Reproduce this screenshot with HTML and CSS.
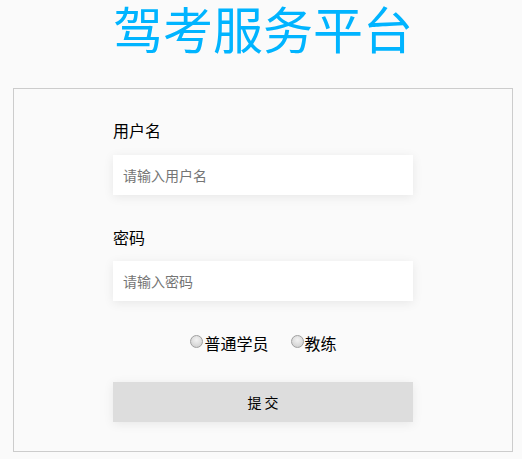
FILE: index.html
```html
<!DOCTYPE html>
<html lang="zh-CN">
<head>
<meta charset="utf-8">
<title>驾考服务平台</title>
<link rel="stylesheet" href="styles.css">
</head>
<body>
<h1 class="title">驾考服务平台</h1>
<form class="panel">
  <div class="field">
    <label class="field-label" for="user">用户名</label>
    <input class="field-input" id="user" type="text" placeholder="请输入用户名">
  </div>
  <div class="field">
    <label class="field-label" for="pwd">密码</label>
    <input class="field-input" id="pwd" type="password" placeholder="请输入密码">
  </div>
  <div class="roles">
    <label class="role"><input class="role-radio" type="radio" name="role">普通学员</label>
    <label class="role"><input class="role-radio" type="radio" name="role">教练</label>
  </div>
  <button class="submit" type="button">提 交</button>
</form>
</body>
</html>
```
FILE: styles.css
```css
* { box-sizing: border-box; }
html, body { margin: 0; padding: 0; }
body {
  background: #fafafa;
  font-family: "Noto Sans CJK SC", "Liberation Sans", sans-serif;
  color: #000;
  padding: 0 10px 0 13px;
}
.title {
  margin: 0;
  font-size: 50px;
  font-weight: normal;
  line-height: 54px;
  text-align: center;
  color: #00b4ff;
  padding-left: 1px;
}
.panel {
  margin-top: 34px;
  width: 500px;
  border: 1px solid #cccccc;
  background: #fafafa;
  display: flex;
  flex-direction: column;
  align-items: center;
  padding: 31px 0 29px;
}
.field {
  width: 300px;
  display: flex;
  flex-direction: column;
}
.field + .field { margin-top: 32px; }
.field-label {
  font-size: 16px;
  line-height: 20px;
  margin-bottom: 15px;
}
.field + .field .field-label { margin-bottom: 14px; }
.field-input {
  height: 40px;
  border: none;
  outline: none;
  background: #fff;
  padding: 0 10px;
  font-family: inherit;
  font-size: 14px;
  box-shadow: 0 2px 10px rgba(0,0,0,0.08);
}
.field-input::placeholder { color: #757575; }
.roles {
  margin-top: 32px;
  display: flex;
  justify-content: center;
  gap: 17px;
  font-size: 16px;
  line-height: 20px;
  padding-right: 4px;
}
.role { display: flex; align-items: center; }
.role-radio {
  appearance: none;
  -webkit-appearance: none;
  width: 13px;
  height: 13px;
  margin: 0 1px 0 5px;
  border-radius: 50%;
  border: 1px solid #a0a0a0;
  background: radial-gradient(circle at 50% 35%, #f2f2f2 0%, #d6d6d6 70%, #c4c4c4 100%);
  position: relative;
  top: -2px;
}
.submit {
  margin-top: 29px;
  width: 300px;
  height: 40px;
  border: none;
  background: #dddddd;
  font-family: inherit;
  font-size: 14px;
  color: #000;
  box-shadow: 0 2px 10px rgba(0,0,0,0.08);
}
```
